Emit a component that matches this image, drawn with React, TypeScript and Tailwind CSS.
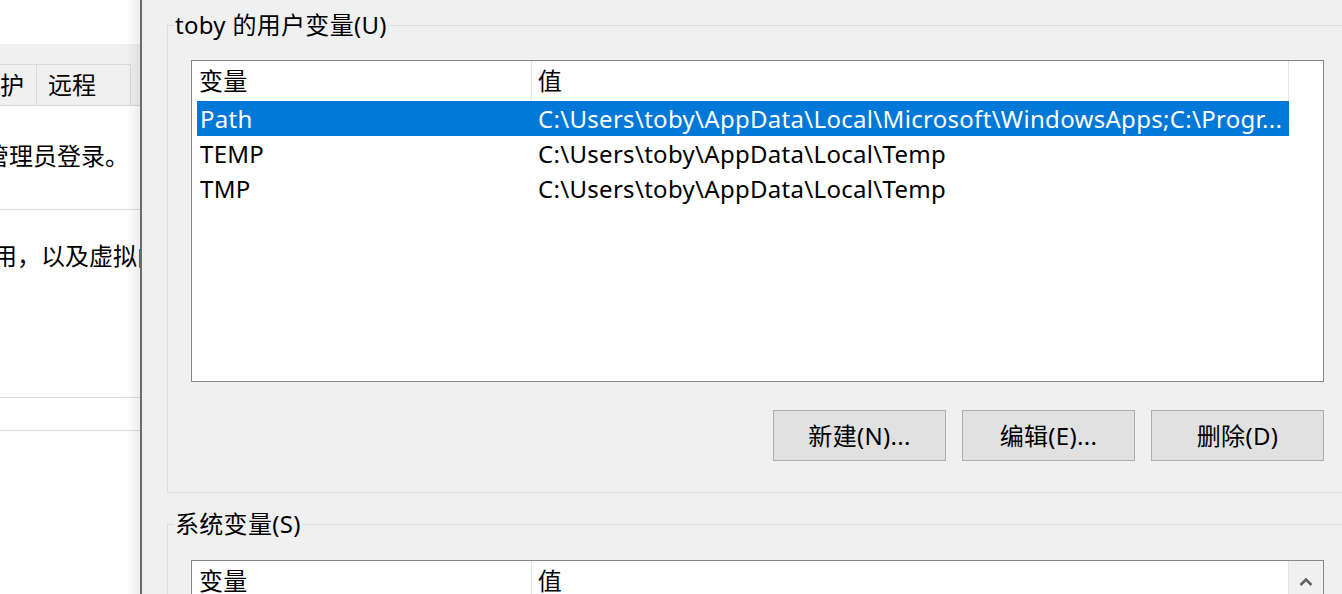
import React from 'react';

type EnvRow = { name: string; value: string; selected?: boolean };

const userVars: EnvRow[] = [
  { name: 'Path', value: 'C:\\Users\\toby\\AppData\\Local\\Microsoft\\WindowsApps;C:\\Progr...', selected: true },
  { name: 'TEMP', value: 'C:\\Users\\toby\\AppData\\Local\\Temp' },
  { name: 'TMP', value: 'C:\\Users\\toby\\AppData\\Local\\Temp' },
];

function ListHeader() {
  return (
    <div className="flex h-[40px] w-[1092px] shrink-0 leading-[40px]">
      <div className="w-[335px] border-r border-[#e5e5e5] pl-[2px]">变量</div>
      <div className="w-[758px] border-r border-[#e5e5e5] pl-[6px]">值</div>
    </div>
  );
}

function WinButton({ label }: { label: string }) {
  return (
    <button className="h-[51px] w-[173px] border border-[#adadad] bg-[#e1e1e1] text-[24px] leading-[49px]">
      {label}
    </button>
  );
}

export default function App() {
  return (
    <div className="flex h-[594px] w-[1342px] overflow-hidden bg-white font-['Noto_Sans','Noto_Sans_CJK_SC',sans-serif] text-[24px] text-black">
      {/* system properties window behind */}
      <div className="relative w-[140px] shrink-0 overflow-hidden bg-white">
        <div className="h-[44px]" />
        <div className="flex h-[62px] items-end border-b border-[#d9d9d9] bg-[#f0f0f0]">
          <div className="ml-[-84px] h-[41px] w-[120px] shrink-0 whitespace-nowrap border-l border-t border-[#d9d9d9] pr-[12px] text-right leading-[40px]">
            系统保护
          </div>
          <div className="h-[41px] w-[95px] shrink-0 border-l border-r border-t border-[#d9d9d9] pl-[11px] leading-[40px]">
            远程
          </div>
        </div>
        <div className="ml-[-15px] mt-[35px] whitespace-nowrap leading-[30px]">管理员登录。</div>
        <div className="mt-[38px] h-px bg-[#dcdcdc]" />
        <div className="ml-[-7px] mt-[31px] whitespace-nowrap leading-[30px]">用，以及虚拟内存</div>
        <div className="mt-[126px] h-px bg-[#dcdcdc]" />
        <div className="mt-[32px] h-px bg-[#dcdcdc]" />
        <div className="absolute bottom-0 right-0 top-0 w-[14px] bg-linear-to-r from-transparent to-[#00000012]" />
      </div>
      <div className="w-[2px] shrink-0 bg-[#6b6b6b]" />

      {/* environment variables dialog */}
      <div className="flex-1 overflow-hidden bg-[#f0f0f0] pl-[25px] tracking-[0.3px]">
        <fieldset className="mt-[10px] w-[1182px] border border-[#dcdcdc]">
          <legend className="ml-[6px] px-[1px] leading-[30px]">toby 的用户变量(U)</legend>
          <div className="w-[1156px] pb-[31px] pl-[23px] pt-[20px]">
            <div className="h-[322px] w-[1133px] border border-[#828790] bg-white pl-[5px]">
              <ListHeader />
              {userVars.map((row) => (
                <div
                  key={row.name}
                  className={`flex h-[35px] w-[1092px] whitespace-nowrap leading-[35px] ${
                    row.selected ? 'bg-[#0078d7] text-white' : ''
                  }`}
                >
                  <div className="w-[335px] pl-[3px]">{row.name}</div>
                  <div className="w-[757px] overflow-hidden pl-[6px]">{row.value}</div>
                </div>
              ))}
            </div>
            <div className="mt-[28px] flex w-[1133px] justify-end gap-[16px]">
              <WinButton label="新建(N)..." />
              <WinButton label="编辑(E)..." />
              <WinButton label="删除(D)" />
            </div>
          </div>
        </fieldset>

        <fieldset className="mt-[16px] w-[1182px] border border-[#dcdcdc]">
          <legend className="ml-[6px] px-[1px] leading-[30px]">系统变量(S)</legend>
          <div className="w-[1156px] pl-[23px] pt-[21px]">
            <div className="flex h-[200px] w-[1133px] border border-[#828790] bg-white pl-[5px]">
              <ListHeader />
              <div className="flex h-full w-[34px] shrink-0 justify-center bg-[#f0f0f0] pt-[16px]">
                <svg width="14" height="10" viewBox="0 0 14 10">
                  <polyline points="1.5,8 7,2.5 12.5,8" fill="none" stroke="#606060" strokeWidth="2.6" />
                </svg>
              </div>
            </div>
          </div>
        </fieldset>
      </div>
    </div>
  );
}
